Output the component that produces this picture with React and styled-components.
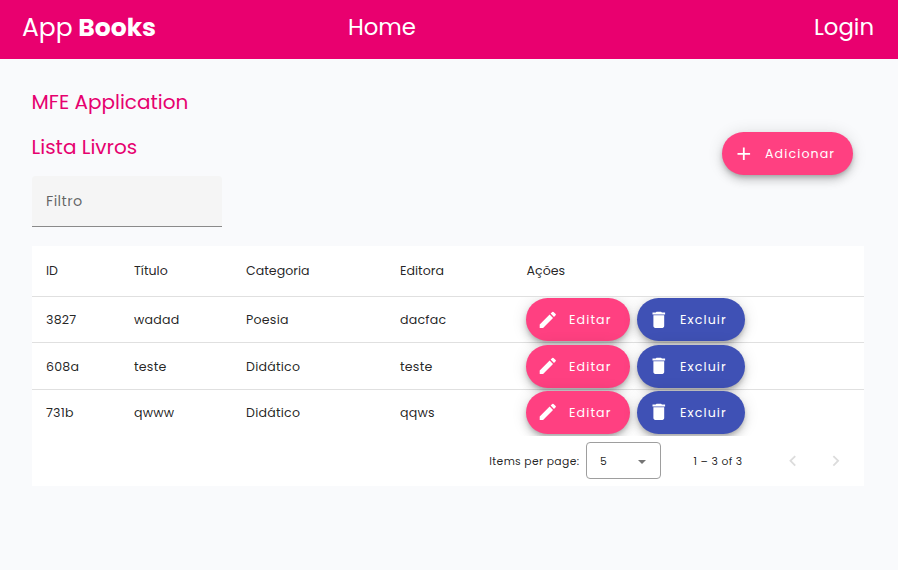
import React from "react";
import styled, { createGlobalStyle } from "styled-components";

const GlobalStyle = createGlobalStyle`
  *, *::before, *::after { box-sizing: border-box; }
  body {
    margin: 0;
    background: #f9fafc;
    color: rgba(0, 0, 0, 0.87);
    font-family: Poppins, Inter, "Open Sans", sans-serif;
    font-feature-settings: "cv11" 1;
  }
`;

const Toolbar = styled.header`
  display: grid;
  grid-template-columns: 326px 1fr auto;
  align-items: center;
  height: 59px;
  padding: 0 24px 5px 22px;
  background: #e9006f;
  color: #fff;
`;

const Brand = styled.div`
  padding-top: 1px;
  font-size: 25px;
  line-height: 30px;
  word-spacing: -1px;
`;

const NavLink = styled.a`
  font-size: 22.8px;
  line-height: 30px;
`;

const Page = styled.main`
  padding: 21px 34px 0 32px;
`;

const Heading = styled.h2`
  margin: 0;
  font-size: 20px;
  font-weight: 400;
  line-height: 45px;
  color: #e6006f;
  text-indent: -0.4px;
`;

const ListHeader = styled.div`
  display: flex;
  justify-content: space-between;
  height: 51px;
  padding-right: 11px;
`;

const AddSlot = styled.div`
  padding-top: 7px;
`;

const ActionButton = styled.button`
  display: inline-flex;
  flex: none;
  align-items: center;
  gap: 10.4px;
  width: ${(p) => p.$width}px;
  height: 43px;
  margin: 0;
  padding: 0 0 0 11px;
  border: 0;
  border-radius: 22px;
  background: ${(p) => (p.$tone === "primary" ? "#3f51b5" : "#ff4081")};
  color: #fff;
  font: inherit;
  font-feature-settings: inherit;
  font-size: 12.6px;
  font-weight: 400;
  letter-spacing: 1.11px;
  white-space: nowrap;
  box-shadow:
    0 2.7px 4.5px -0.9px rgba(0, 0, 0, 0.2),
    0 5.4px 9px rgba(0, 0, 0, 0.14),
    0 0.9px 16.2px rgba(0, 0, 0, 0.12);
`;

const Icon = styled.svg`
  flex: none;
  width: 21.6px;
  height: 21.6px;
  margin-bottom: ${(p) => (p.$raised ? 1 : 0)}px;
  fill: currentColor;
`;

const FilterField = styled.div`
  display: flex;
  align-items: center;
  width: 190px;
  height: 51px;
  padding-left: 14px;
  border-bottom: 1px solid #8a8a8a;
  border-radius: 4px 4px 0 0;
  background: #f5f5f5;
  color: rgba(0, 0, 0, 0.6);
  font-size: 14.4px;
  letter-spacing: 0.4px;
`;

const Card = styled.section`
  width: 832px;
  margin-top: 19px;
  background: #fff;
`;

const Rows = styled.div`
  overflow: hidden;
  letter-spacing: 0.225px;
`;

const Row = styled.div`
  display: grid;
  grid-template-columns: 88px 112px 154px 126px 1fr;
  align-items: center;
  height: ${(p) => p.$height}px;
  padding: ${(p) => p.$top || 0}px 0 0 14px;
  border-bottom: 1px solid ${(p) => (p.$last ? "transparent" : "#e0e0e0")};
  font-size: 12.6px;
`;

const Cell = styled.span`
  white-space: nowrap;

  &:nth-child(5) {
    padding-left: 0.6px;
  }
`;

const Actions = styled.div`
  display: flex;
  gap: 7px;
`;

const Paginator = styled.footer`
  display: flex;
  align-items: center;
  justify-content: flex-end;
  height: 50px;
  padding: 0 7px 1px 0;
  font-size: 10.8px;
  letter-spacing: 0.36px;
`;

const PageLabel = styled.span`
  margin-right: 6.6px;
  padding-top: 2px;
`;

const PageSize = styled.div`
  display: flex;
  align-items: center;
  justify-content: space-between;
  width: 75px;
  height: 37px;
  padding: 2px 14px 0 13px;
  border: 1px solid #9e9e9e;
  border-radius: 4px;
`;

const Arrow = styled.span`
  border: 4.5px solid transparent;
  border-top-color: #757575;
  border-bottom: 0;
`;

const Range = styled.span`
  width: 77.5px;
  margin-left: 32.5px;
  padding-top: 2px;
`;

const PageButton = styled.button`
  display: flex;
  align-items: center;
  justify-content: center;
  width: 43px;
  height: 43px;
  padding: 0;
  border: 0;
  background: none;
  color: #dcdcdc;
`;

const icons = {
  add: "M19 13h-6v6h-2v-6H5v-2h6V5h2v6h6v2z",
  edit: "M3 17.25V21h3.75L17.81 9.94l-3.75-3.75L3 17.25zM20.71 7.04a1 1 0 0 0 0-1.41l-2.34-2.34a1 1 0 0 0-1.41 0l-1.83 1.83 3.75 3.75 1.83-1.83z",
  remove: "M6 19c0 1.1.9 2 2 2h8c1.1 0 2-.9 2-2V7H6v12zM19 4h-3.5l-1-1h-5l-1 1H5v2h14V4z",
  previous: "M15.41 7.41L14 6l-6 6 6 6 1.41-1.41L10.83 12z",
  next: "M10 6L8.59 7.41 13.17 12l-4.58 4.59L10 18l6-6z",
};

const Glyph = ({ name, raised }) => (
  <Icon viewBox="0 0 24 24" aria-hidden="true" $raised={raised}>
    <path d={icons[name]} />
  </Icon>
);

const columns = ["ID", "Título", "Categoria", "Editora", "Ações"];

const books = [
  ["3827", "wadad", "Poesia", "dacfac"],
  ["608a", "teste", "Didático", "teste"],
  ["731b", "qwww", "Didático", "qqws"],
];

const Cells = ({ items }) => items.map((text, i) => <Cell key={i}>{text}</Cell>);

export default function App() {
  return (
    <>
      <GlobalStyle />
      <Toolbar>
        <Brand>
          App <strong>Books</strong>
        </Brand>
        <NavLink>Home</NavLink>
        <NavLink>Login</NavLink>
      </Toolbar>
      <Page>
        <Heading>MFE Application</Heading>
        <ListHeader>
          <Heading>Lista Livros</Heading>
          <AddSlot>
            <ActionButton $width={131}>
              <Glyph name="add" />
              Adicionar
            </ActionButton>
          </AddSlot>
        </ListHeader>
        <FilterField>Filtro</FilterField>
        <Card>
          <Row $height={51}>
            <Cells items={columns} />
          </Row>
          <Rows>
            {books.map((book, i) => (
              <Row key={i} $height={i === 1 ? 47 : 46} $top={i === 1 ? 1 : 0} $last={i === 2}>
                <Cells items={book} />
                <Actions>
                  <ActionButton $width={104}>
                    <Glyph name="edit" raised={i > 0} />
                    Editar
                  </ActionButton>
                  <ActionButton $width={108} $tone="primary">
                    <Glyph name="remove" raised={i > 0} />
                    Excluir
                  </ActionButton>
                </Actions>
              </Row>
            ))}
          </Rows>
          <Paginator>
            <PageLabel>Items per page:</PageLabel>
            <PageSize>
              5
              <Arrow />
            </PageSize>
            <Range>1 – 3 of 3</Range>
            <PageButton aria-label="Previous page">
              <Glyph name="previous" />
            </PageButton>
            <PageButton aria-label="Next page">
              <Glyph name="next" />
            </PageButton>
          </Paginator>
        </Card>
      </Page>
    </>
  );
}
